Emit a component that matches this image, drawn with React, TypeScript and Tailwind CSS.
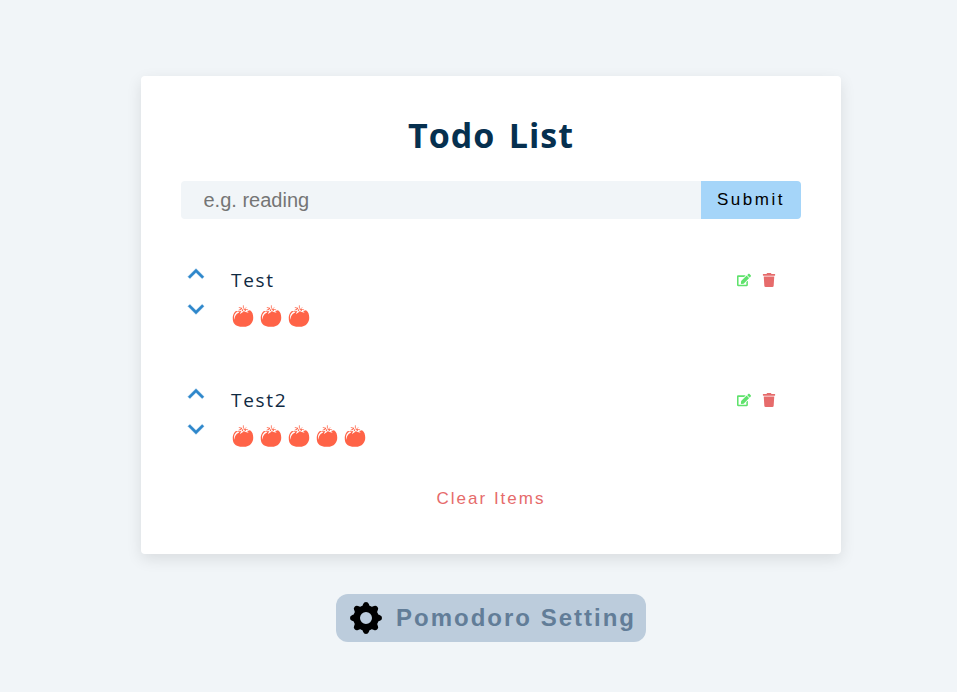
import { useState } from "react";
import { FaEdit, FaTrash } from "react-icons/fa";
import { GiTomato } from "react-icons/gi";
import { MdKeyboardArrowDown, MdKeyboardArrowUp } from "react-icons/md";

type Todo = { id: number; title: string; tomatoes: number };

const initialTodos: Todo[] = [
  { id: 1, title: "Test", tomatoes: 3 },
  { id: 2, title: "Test2", tomatoes: 5 },
];

const toothAngles = [0, 45, 90, 135, 180, 225, 270, 315];

function GearIcon() {
  return (
    <svg viewBox="-16 -16 32 32" className="mr-[14px] size-8 shrink-0 text-black" fill="currentColor">
      <circle r="9.25" fill="none" stroke="currentColor" strokeWidth="6.5" />
      {toothAngles.map((angle) => (
        <path key={angle} transform={`rotate(${angle})`} d="M-5.2-11C-3.6-11.8-3.2-12.8-2.8-14Q-2.1-16 0-16T2.8-14C3.2-12.8 3.6-11.8 5.2-11L3-8H-3Z" />
      ))}
    </svg>
  );
}

function TodoItem({ todo }: { todo: Todo }) {
  return (
    <article className="flex h-[120px] items-start pt-2">
      <div className="mr-[3px] -ml-px flex w-[48px] flex-col gap-[3px] text-[32px] text-[#2d87cb]">
        <button aria-label="Move up"><MdKeyboardArrowUp className="[&>path:last-child]:stroke-current [&>path:last-child]:stroke-[0.3] [&>path:first-child:not(:last-child)]:stroke-none" strokeWidth={0} /></button>
        <button aria-label="Move down"><MdKeyboardArrowDown className="[&>path:last-child]:stroke-current [&>path:last-child]:stroke-[0.3] [&>path:first-child:not(:last-child)]:stroke-none" strokeWidth={0} /></button>
      </div>
      <div className="flex-1 pt-[10px]">
        <p className="h-6 font-['Open_Sans',sans-serif] text-[19px] leading-6 tracking-[1.7px] text-[#102a42]">{todo.title}</p>
        <div className="mt-3 flex gap-1 text-[24px] text-[#ff6347]">
          {Array.from({ length: todo.tomatoes }, (_, i) => <GiTomato key={i} />)}
        </div>
      </div>
      <div className="flex gap-[11px] pt-[15px] pr-[25px] text-[14px]">
        <button aria-label="Edit" className="text-[#5fe26c]"><FaEdit /></button>
        <button aria-label="Delete" className="text-[#e66b6b]"><FaTrash /></button>
      </div>
    </article>
  );
}

export default function App() {
  const [todos, setTodos] = useState(initialTodos);
  return (
    <main className="flex min-h-screen flex-col items-center bg-[#f1f5f8] pt-[76px] pl-[25px] font-['Liberation_Sans',Arial,sans-serif]">
      <section className="h-[478px] w-[700px] rounded-[4px] bg-white px-10 pt-[35px] shadow-[0_5px_15px_rgba(0,0,0,0.1)]">
        <h1 className="h-12 text-center font-['Open_Sans',sans-serif] text-[34px] leading-[48px] font-bold tracking-[1px] [word-spacing:3.5px] text-[#06304f]">Todo List</h1>
        <form className="mt-[22px] flex h-[38px]" onSubmit={(e) => e.preventDefault()}>
          <input className="w-[520px] rounded-l-[4px] bg-[#f1f5f8] pl-[22.5px] text-[20px] text-[#102a42] outline-none placeholder:text-[#757575]" placeholder="e.g. reading" />
          <button className="w-[100px] rounded-r-[4px] bg-[#a5d5f9] text-[17px] tracking-[2.5px] text-black">Submit</button>
        </form>
        <div className="mt-[31px]">
          {todos.map((todo) => <TodoItem key={todo.id} todo={todo} />)}
        </div>
        <button className="mx-auto mt-[-3px] block h-6 text-[17px] leading-6 tracking-[2px] text-[#e66b6b]" onClick={() => setTodos([])}>Clear Items</button>
      </section>
      <button className="mt-10 flex h-12 w-[310px] items-center rounded-[12px] bg-[#bcccdc] pl-[14px] text-[24px] font-bold tracking-[2px] whitespace-nowrap text-[#627d98]">
        <GearIcon />
        Pomodoro Setting
      </button>
    </main>
  );
}
